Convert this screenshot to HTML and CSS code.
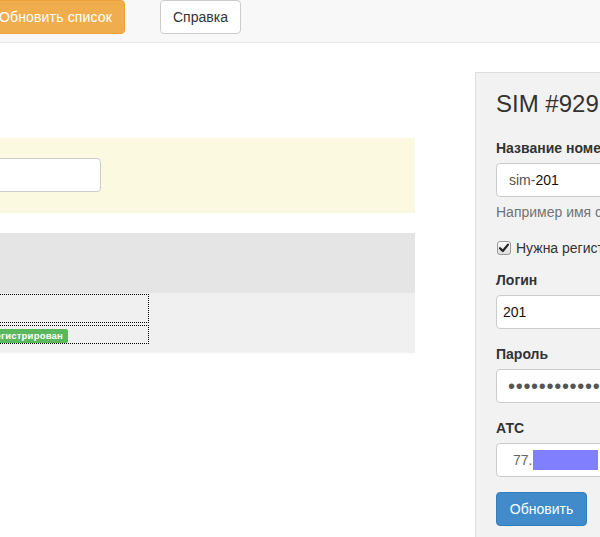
FILE: index.html
```html
<!DOCTYPE html>
<html lang="ru">
<head>
<meta charset="utf-8">
<title>SIM</title>
<link rel="stylesheet" href="styles.css">
</head>
<body>
<div class="topbar">
  <div class="refresh-wrap"><button class="btn btn-warning">Обновить список</button></div>
  <button class="btn btn-default">Справка</button>
</div>
<div class="main">
  <div class="left">
    <div class="alert">
      <div class="search-wrap"><input class="search" type="text"></div>
    </div>
    <div class="table-head"></div>
    <div class="table-body">
      <div class="cell cell-name"></div>
      <div class="cell cell-status">
        <div class="status-wrap"><span class="label-success">Зарегистрирован</span></div>
      </div>
    </div>
  </div>
  <div class="panel">
    <h3 class="title">SIM #929<span class="sel"></span></h3>
    <div class="form-group">
      <label class="lbl">Название номера</label>
      <div class="form-control"><span class="prefix">sim-</span>201</div>
      <p class="help">Например имя сотрудника</p>
    </div>
    <div class="checkbox">
      <svg class="cb" width="14" height="14" viewBox="0 0 14 14">
        <defs>
          <linearGradient id="g" x1="0" y1="0" x2="0" y2="1">
            <stop offset="0" stop-color="#fdfdfd"/>
            <stop offset="1" stop-color="#dcdcdc"/>
          </linearGradient>
        </defs>
        <rect x="0.5" y="0.5" width="13" height="13" rx="2.5" fill="url(#g)" stroke="#9a9a9a"/>
        <path d="M3 7.2 L5.8 10 L11 3.6" fill="none" stroke="#222" stroke-width="2.2" stroke-linecap="round" stroke-linejoin="round"/>
      </svg>
      <span>Нужна регистрация</span>
    </div>
    <div class="form-group">
      <label class="lbl">Логин</label>
      <div class="form-control login">201</div>
    </div>
    <div class="form-group">
      <label class="lbl">Пароль</label>
      <div class="form-control pw">••••••••••••••</div>
    </div>
    <div class="form-group">
      <label class="lbl">АТС</label>
      <div class="form-control ats"><span class="ip">77.</span><span class="mask"></span></div>
    </div>
    <button class="btn btn-primary">Обновить</button>
  </div>
</div>
</body>
</html>
```
FILE: styles.css
```css
html, body {
  margin: 0;
  padding: 0;
}
body {
  width: 600px;
  height: 537px;
  overflow: hidden;
  background: #fff;
  font-family: "Liberation Sans", Arial, sans-serif;
  font-size: 14px;
  color: #333;
}
.topbar {
  height: 42px;
  background: #f8f8f8;
  border-bottom: 1px solid #e7e7e7;
  display: flex;
  align-items: flex-start;
  gap: 35px;
}
.refresh-wrap {
  width: 125px;
  display: flex;
  justify-content: flex-end;
}
.btn {
  height: 34px;
  box-sizing: border-box;
  padding: 0 12px;
  border: 1px solid transparent;
  border-radius: 4px;
  font-family: "Liberation Sans", Arial, sans-serif;
  font-size: 14px;
  line-height: 32px;
  white-space: nowrap;
  flex: none;
}
.btn-warning {
  background: #f0ad4e;
  border-color: #eea236;
  color: #fff;
  letter-spacing: 0.15px;
}
.btn-default {
  background: #fff;
  border-color: #ccc;
  color: #333;
}
.btn-primary {
  background: #428bca;
  border-color: #357ebd;
  color: #fff;
  width: 91px;
  padding: 0;
}
.main {
  display: flex;
  align-items: flex-start;
}
.left {
  width: 415px;
  flex: none;
  padding-top: 95px;
}
.alert {
  height: 75px;
  box-sizing: border-box;
  background: #fbf9e0;
  padding-top: 20px;
}
.search-wrap {
  width: 101px;
  display: flex;
  justify-content: flex-end;
}
.search {
  flex: none;
  width: 260px;
  height: 34px;
  box-sizing: border-box;
  border: 1px solid #ccc;
  border-radius: 4px;
  background: #fff;
  margin: 0;
  padding: 0;
}
.table-head {
  margin-top: 20px;
  height: 60px;
  background: #e5e5e5;
}
.table-body {
  height: 60px;
  box-sizing: border-box;
  background: #f0f0f0;
  padding-top: 1px;
}
.cell {
  width: 151px;
  margin-left: -2px;
  box-sizing: border-box;
  border: 1px dotted #000;
}
.cell-name {
  height: 29px;
}
.cell-status {
  height: 19px;
  margin-top: 2px;
  padding-top: 3px;
}
.status-wrap {
  width: 69px;
  display: flex;
  justify-content: flex-end;
}
.label-success {
  flex: none;
  background: #5cb85c;
  color: #fff;
  font-weight: bold;
  font-size: 9.5px;
  line-height: 14px;
  height: 14px;
  padding: 0 5px;
  border-radius: 2px;
  white-space: nowrap;
  letter-spacing: 0.2px;
}
.panel {
  flex: none;
  margin-left: 60px;
  margin-top: 29px;
  width: 300px;
  height: 600px;
  background: #f2f2f2;
  border-left: 1px solid #dedede;
  border-top: 1px solid #dedede;
  padding: 17px 20px 0;
}
.title {
  margin: 0 0 20px;
  font-size: 24px;
  font-weight: normal;
  line-height: 28px;
  height: 28px;
  display: flex;
  color: #333;
  white-space: nowrap;
}
.sel {
  display: inline-block;
  width: 6px;
  height: 28px;
  background: #8080ff;
  margin-left: 1px;
}
.form-group {
  margin-bottom: 15px;
}
.lbl {
  display: block;
  font-weight: bold;
  line-height: 20px;
  margin-bottom: 5px;
  white-space: nowrap;
}
.form-control {
  height: 34px;
  box-sizing: border-box;
  border: 1px solid #ccc;
  border-radius: 4px;
  background: #fff;
  padding: 0 12px;
  line-height: 32px;
  color: #111;
  white-space: nowrap;
  overflow: hidden;
}
.prefix {
  color: #555;
}
.login {
  padding-left: 6px;
}
.pw {
  font-size: 20px;
  color: #555;
  letter-spacing: 0.7px;
  padding-left: 11px;
}
.ats {
  padding-left: 16px;
  display: flex;
  align-items: center;
}
.ip {
  color: #666;
}
.mask {
  display: inline-block;
  width: 65px;
  height: 20px;
  background: #8080ff;
  margin-left: 1px;
}
.help {
  margin: 5px 0 10px;
  line-height: 20px;
  color: #737373;
  white-space: nowrap;
}
.checkbox {
  margin: 16px 0 12px;
  line-height: 20px;
  display: flex;
  align-items: center;
  white-space: nowrap;
}
.cb {
  margin-left: 1px;
  margin-right: 5px;
  flex: none;
}
```
